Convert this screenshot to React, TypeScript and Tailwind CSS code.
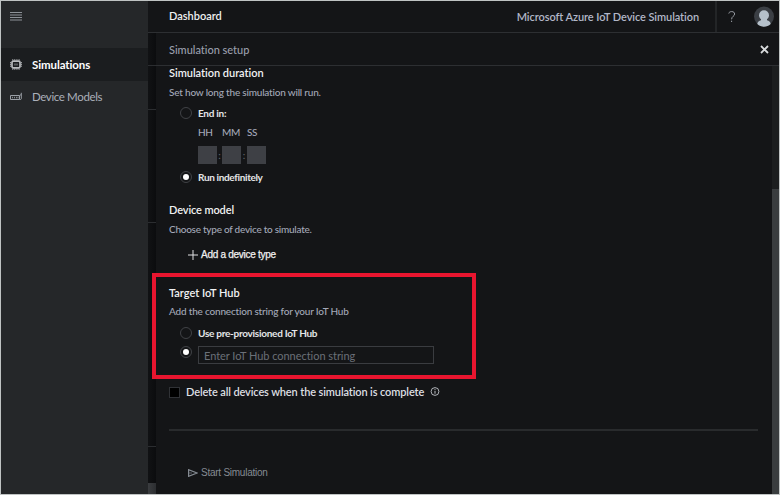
import React from 'react';

function Radio({ checked = false, className = '' }: { checked?: boolean; className?: string }) {
  return (
    <span className={`flex size-[12px] shrink-0 items-center justify-center rounded-full border border-[#404246] ${className}`}>
      {checked && <span className="size-[6px] rounded-full bg-white" />}
    </span>
  );
}

function ChipIcon() {
  return (
    <svg width="12" height="11" viewBox="0 0 12 11" fill="none" stroke="#b9bbbe">
      <rect x="2" y="2.2" width="8" height="6.6" rx="1.2" strokeWidth="1.7" />
      <path d="M4 4.5h4v2H4z" fill="#55585b" stroke="none" />
      <path d="M2 .9h8M2 10.1h8M.6 3v5M11.4 3v5" strokeDasharray="1.2 .6" strokeWidth=".9" />
    </svg>
  );
}

function DeviceIcon() {
  return (
    <svg width="12" height="10" viewBox="0 0 12 10" fill="none" stroke="#9a9fa6">
      <path d="M.5 3.5h9v4h-9zM9.5 7.5h1.2l.6-.8V.8M9.7 3.6l1.4-1.1" />
      <path d="M2.5 4.8v1.5M4.5 4.8v1.5M6.5 4.8v1.5M8 4.8v1.5" strokeWidth=".8" />
    </svg>
  );
}

function Sidebar() {
  return (
    <nav className="flex w-[147px] shrink-0 flex-col bg-[#252729]">
      <div className="flex h-[47px] items-start pt-[10px] pl-[9px]">
        <svg width="12" height="10" viewBox="0 0 12 10" stroke="#9a9ea5" fill="none">
          <path d="M0 1.5h12M0 4h12M0 6.5h12M0 9h12" strokeWidth=".9" />
        </svg>
      </div>
      <div className="flex h-[33px] items-center bg-[#1b1d1f] pl-[9px] text-[11.5px] font-bold tracking-[-0.1px] text-white">
        <ChipIcon />
        <span className="ml-[10px]">Simulations</span>
      </div>
      <div className="flex h-[32px] items-center pl-[9px] text-[11.5px] tracking-[-0.37px] text-[#abb0ba]">
        <DeviceIcon />
        <span className="ml-[10px]">Device Models</span>
      </div>
    </nav>
  );
}

function Gutter() {
  return (
    <div className="flex w-[8px] shrink-0 flex-col bg-linear-to-r from-[#111214] to-[#0b0c0e]">
      <div className="h-[33px] border-b border-[#2b2d30]" />
      <div className="h-[44px] border-b border-[#2b2d30]" />
      <div className="h-[113px] border-b border-[#2b2d30]" />
      <div className="h-[224px] border-b border-[#2b2d30]" />
      <div className="h-[36px]" />
      <div className="flex-1 bg-linear-to-r from-[#3b3d40] to-[#2c2e31]" />
    </div>
  );
}

function TimeBox() {
  return <span className="h-[18px] w-[19px] bg-[#3e4045]" />;
}

function SetupForm() {
  return (
    <div className="flex flex-1 flex-col pl-[13px] pr-[14px] text-[10px] font-medium text-[#a3a8b7]">
      <h2 className="flex h-[15px] items-center pb-[2px] text-[11px] font-semibold tracking-[-0.02px] text-[#f0f1f2]">Simulation duration</h2>
      <p className="flex h-[23px] items-center pb-[2px] tracking-[-0.2px]">Set how long the simulation will run.</p>
      <div className="flex h-[19px] items-center pb-px pl-[11px] font-bold tracking-[-0.28px] text-[#e4e5e7]">
        <Radio />
        <span className="ml-[6px]">End in:</span>
      </div>
      <div className="flex h-[20px] items-center pb-[2px] pl-[29px] tracking-[-0.4px]">
        <span className="w-[24px]">HH</span>
        <span className="w-[25px]">MM</span>
        <span>SS</span>
      </div>
      <div className="flex h-[24px] items-center pl-[29px] text-[#63666b]">
        <TimeBox />
        <span className="w-[5px] text-center">:</span>
        <TimeBox />
        <span className="w-[6px] text-center">:</span>
        <TimeBox />
      </div>
      <div className="flex h-[20px] items-center pb-px pl-[11px] font-bold tracking-[-0.35px] text-[#e4e5e7]">
        <Radio checked />
        <span className="ml-[6px]">Run indefinitely</span>
      </div>

      <h2 className="mt-[13px] flex h-[20px] items-center pb-[2px] text-[11px] font-semibold tracking-[-0.12px] text-[#f0f1f2]">Device model</h2>
      <p className="flex h-[20px] items-center pb-[2px] tracking-[-0.26px]">Choose type of device to simulate.</p>
      <div className="flex h-[30px] items-center pl-[19px] font-['Liberation_Sans'] text-[10px] tracking-[-0.28px] text-[#f0f0f0] [-webkit-text-stroke:0.25px]">
        <svg width="10" height="10" viewBox="0 0 10 10" stroke="#e0e1e3" fill="none"><path d="M0 5h10M5 0v10" /></svg>
        <span className="ml-[3px]">Add a device type</span>
      </div>

      <h2 className="mt-[13px] flex h-[20px] items-center pb-[2px] text-[11px] font-semibold text-[#f0f1f2]">Target IoT Hub</h2>
      <p className="flex h-[18px] items-center pb-[2px] tracking-[-0.19px]">Add the connection string for your IoT Hub</p>
      <div className="flex h-[24px] items-center pl-[11px] font-bold tracking-[-0.27px] text-[#e4e5e7]">
        <Radio />
        <span className="ml-[6px]">Use pre-provisioned IoT Hub</span>
      </div>
      <div className="flex h-[20px] items-start pl-[11px]">
        <Radio checked className="mt-px" />
        <div className="ml-[6px] mt-[1px] flex h-[18px] w-[236px] items-center border border-[#3a3c40] pl-[5px] text-[11px] font-normal tracking-[-0.04px] text-[#6b7078]">
          Enter IoT Hub connection string
        </div>
      </div>
      <div className="mt-[17px] flex h-[20px] items-center pb-px text-[11px] font-semibold tracking-[-0.12px] text-[#dddfe2]">
        <span className="mt-px size-[11px] border border-[#303236] bg-black" />
        <span className="ml-[6px]">Delete all devices when the simulation is complete</span>
        <svg className="ml-[6px]" width="10" height="9" viewBox="0 0 10 9" stroke="#c0c3c8" fill="none">
          <circle cx="5" cy="4.5" r="3.9" strokeWidth=".9" />
          <path d="M5 4v2.7M5 2.2v1" />
        </svg>
      </div>
      <div className="mt-[27px] border-b-2 border-[#292b2d]" />
      <div className="mt-[32px] flex h-[20px] items-center pl-[19px] font-['Liberation_Sans'] text-[10px] font-normal tracking-[-0.25px] text-[#858b93]">
        <svg width="10" height="8" viewBox="0 0 10 8" stroke="#858b93" fill="none"><path d="M.6.7v6.6L9 4z" strokeWidth="1.2" /><path d="M.6 4H4" strokeWidth=".6" /></svg>
        <span className="ml-[3px]">Start Simulation</span>
      </div>
    </div>
  );
}

export default function App() {
  return (
    <div className="relative flex h-[495px] w-[780px] overflow-hidden border border-[#bfc3c3] bg-[#141517] font-['Lato','Open_Sans',sans-serif] leading-none whitespace-nowrap">
      <Sidebar />
      <div className="flex flex-1 flex-col">
        <header className="flex h-[32px] shrink-0 items-center border-b border-[#2d2f32] pl-[21px]">
          <h1 className="pb-[2px] text-[11px] font-semibold text-[#eeeff0]">Dashboard</h1>
          <span className="ml-auto mr-[16px] text-[11px] font-semibold tracking-[-0.08px] text-[#b2b7c7]">Microsoft Azure IoT Device Simulation</span>
          <div className="flex h-full w-[35px] items-center justify-center border-l-2 border-[#232527] pr-[3px]">
            <svg width="8" height="12" viewBox="0 0 8 12" fill="none" stroke="#9a9ea5"><path d="M.8 2.5C1.1 1 2.2.6 3.7.6c1.9 0 2.9 1 2.9 2.4 0 2.3-3 2.2-3 5.3M3.6 9.7V11" /></svg>
          </div>
          <svg className="ml-[4px] mr-[5px]" width="20" height="21" viewBox="0 0 20 21">
            <circle cx="10" cy="10.5" r="10" fill="#3b3f45" />
            <circle cx="10" cy="9.2" r="5" fill="#b5c0ca" />
            <path d="M7 12h6v2.2c2 .4 3.4 1.5 3.7 3.8-3.8 3.5-9.6 3.5-13.4 0 .3-2.3 1.7-3.4 3.7-3.8z" fill="#b5c0ca" />
          </svg>
        </header>
        <div className="flex flex-1">
          <Gutter />
          <section className="flex flex-1 flex-col">
            <div className="flex h-[33px] shrink-0 items-center justify-between border-b border-[#2d2f32] pl-[13px] pr-[10px] text-[11px] font-medium tracking-[-0.02px] text-[#9a9fac]">
              Simulation setup
              <svg width="9" height="9" viewBox="0 0 9 9" stroke="#d9dbdd" fill="none"><path d="M1 1l7 7M8 1L1 8" strokeWidth="1.8" /></svg>
            </div>
            <div className="flex flex-1">
              <SetupForm />
              <div className="flex w-[7px] flex-col justify-end bg-[#1c1e1f]">
                <div className="h-[305px] bg-[#3a3d3f]" />
              </div>
            </div>
          </section>
        </div>
      </div>
      <div className="pointer-events-none absolute left-[151px] top-[272px] h-[106px] w-[324px] border-4 border-[#e8152f]" />
    </div>
  );
}
